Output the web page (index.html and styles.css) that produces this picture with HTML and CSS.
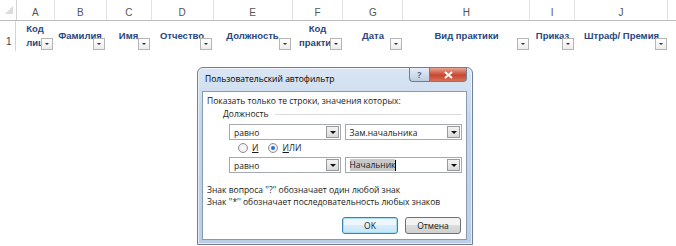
FILE: index.html
```html
<!DOCTYPE html>
<html lang="ru">
<head>
    <meta charset="UTF-8">
    <title>Пользовательский автофильтр</title>
    <link rel="stylesheet" href="styles.css">
</head>
<body>
    <div class="sheet">
        <div class="col-heads">
            <div class="corner"><span class="corner-tri"></span></div>
            <div class="col-head w-a">A</div>
            <div class="col-head w-b">B</div>
            <div class="col-head w-c">C</div>
            <div class="col-head w-d">D</div>
            <div class="col-head w-e">E</div>
            <div class="col-head w-f">F</div>
            <div class="col-head w-g">G</div>
            <div class="col-head w-h">H</div>
            <div class="col-head w-i">I</div>
            <div class="col-head w-j">J</div>
            <div class="col-head w-k"></div>
        </div>
        <div class="row">
            <div class="row-head">1</div>
            <div class="cell w-a"><span class="cell-text">Код лиц</span><span class="filter-btn"></span></div>
            <div class="cell w-b"><span class="cell-text">Фамилия</span><span class="filter-btn"></span></div>
            <div class="cell w-c"><span class="cell-text">Имя</span><span class="filter-btn"></span></div>
            <div class="cell w-d"><span class="cell-text">Отчество</span><span class="filter-btn"></span></div>
            <div class="cell w-e"><span class="cell-text">Должность</span><span class="filter-btn"></span></div>
            <div class="cell w-f"><span class="cell-text">Код практик</span><span class="filter-btn"></span></div>
            <div class="cell w-g"><span class="cell-text">Дата</span><span class="filter-btn"></span></div>
            <div class="cell w-h"><span class="cell-text">Вид практики</span><span class="filter-btn"></span></div>
            <div class="cell w-i"><span class="cell-text">Приказ</span><span class="filter-btn"></span></div>
            <div class="cell w-j"><span class="cell-text">Штраф/ Премия</span><span class="filter-btn"></span></div>
        </div>
    </div>

    <div class="dialog">
        <div class="titlebar">
            <span class="title">Пользовательский автофильтр</span>
            <div class="caption-btns">
                <span class="cap-btn help">?</span>
                <span class="cap-btn close">
                    <svg width="9" height="8" viewBox="0 0 9 8"><path d="M1 1 L8 7 M8 1 L1 7" stroke="#fff" stroke-width="2"/></svg>
                </span>
            </div>
        </div>
        <div class="client">
            <p class="intro">Показать только те строки, значения которых:</p>
            <div class="group">
                <span class="group-label">Должность</span>
                <span class="group-line"></span>
            </div>
            <div class="combo-row first">
                <div class="combo narrow"><span class="combo-val">равно</span><span class="drop"></span></div>
                <div class="combo wide"><span class="combo-val">Зам.начальника</span><span class="drop"></span></div>
            </div>
            <div class="radio-row">
                <span class="radio"><span class="dot"></span><span><u>И</u></span></span>
                <span class="radio"><span class="dot checked"></span><span><u>И</u>ЛИ</span></span>
            </div>
            <div class="combo-row second">
                <div class="combo narrow"><span class="combo-val">равно</span><span class="drop"></span></div>
                <div class="combo wide"><span class="combo-val"><span class="selected">Начальник</span><span class="caret"></span></span><span class="drop"></span></div>
            </div>
            <p class="hint first">Знак вопроса ''?'' обозначает один любой знак</p>
            <p class="hint">Знак ''*'' обозначает последовательность любых знаков</p>
            <div class="buttons">
                <span class="btn default">OK</span>
                <span class="btn">Отмена</span>
            </div>
        </div>
    </div>
</body>
</html>
```

FILE: styles.css
```css
body {
    margin: 0;
    background: #fff;
    font-family: "Open Sans", "Noto Sans", sans-serif;
    position: relative;
    width: 676px;
    height: 246px;
    overflow: hidden;
}

/* spreadsheet */

.sheet {
    display: flex;
    flex-direction: column;
}

.col-heads {
    display: flex;
    height: 21px;
    border-bottom: 1px solid #bcbcbc;
    box-sizing: border-box;
}

.corner {
    width: 16px;
    border-right: 1px solid #d4d4d4;
    position: relative;
}

.corner-tri {
    position: absolute;
    left: 5px;
    top: 6px;
    width: 0;
    height: 0;
    border-left: 8px solid transparent;
    border-bottom: 8px solid #dcdcdc;
}

.col-head {
    border-right: 1px solid #e2e2e2;
    box-sizing: border-box;
    text-align: center;
    font-family: "Liberation Sans", sans-serif;
    font-size: 10px;
    color: #555;
    padding-top: 7px;
}

.w-a { width: 38px; }
.w-b { width: 52px; }
.w-c { width: 45px; }
.w-d { width: 62px; }
.w-e { width: 79px; }
.w-f { width: 51px; }
.w-g { width: 60px; }
.w-h { width: 127px; }
.w-i { width: 45px; }
.w-j { width: 93px; }
.w-k { width: 8px; border-right: none; }

.row {
    display: flex;
    height: 30px;
}

.row-head {
    width: 16px;
    border-right: 1px solid #d4d4d4;
    box-sizing: border-box;
    font-family: "Liberation Sans", sans-serif;
    font-size: 10px;
    color: #444;
    padding: 15px 0 0 6px;
}

.cell {
    position: relative;
    display: flex;
    align-items: center;
    justify-content: center;
    text-align: center;
    box-sizing: border-box;
    padding: 0 2px;
}

.cell-text {
    font-family: "Liberation Sans", sans-serif;
    font-weight: bold;
    font-size: 9.5px;
    line-height: 14px;
    color: #284780;
}

.w-a .cell-text { width: 36px; }
.w-f .cell-text { width: 48px; }
.w-j .cell-text { white-space: nowrap; }

.filter-btn {
    position: absolute;
    right: 1px;
    bottom: 1px;
    width: 10px;
    height: 10px;
    border: 1px solid #b5b5b5;
    background: linear-gradient(#fff, #ececec);
}

.filter-btn::after {
    content: "";
    position: absolute;
    left: 3px;
    top: 4px;
    border-left: 2px solid transparent;
    border-right: 2px solid transparent;
    border-top: 2px solid #333;
}

/* dialog */

.dialog {
    position: absolute;
    left: 197px;
    top: 67px;
    width: 276px;
    height: 178px;
    box-sizing: border-box;
    border: 1px solid #6d7f99;
    border-radius: 6px 6px 0 0;
    background: linear-gradient(#dae6f4, #c5d6ea 30%, #bccee5);
    box-shadow: 0 0 0 1px rgba(255,255,255,0.6) inset;
    padding: 0 5px 4px 4px;
    display: flex;
    flex-direction: column;
    font-size: 8.5px;
    color: #1a1a1a;
}

.titlebar {
    height: 23px;
    display: flex;
    align-items: flex-start;
    justify-content: space-between;
}

.title {
    padding: 5px 0 0 3px;
    color: #000;
}

.caption-btns {
    display: flex;
}

.cap-btn {
    height: 13px;
    border: 1px solid #6e7e96;
    border-top: none;
    display: flex;
    align-items: center;
    justify-content: center;
}

.help {
    width: 19px;
    border-radius: 0 0 0 4px;
    border-right: none;
    background: linear-gradient(#e6eef8, #bccde2);
    color: #5a6c84;
    font-size: 9px;
    font-weight: bold;
}

.close {
    width: 36px;
    border-radius: 0 0 4px 0;
    background: linear-gradient(#e8a493, #c7472f 55%, #d9705a);
}

.client {
    flex: 1;
    background: #fff;
    border: 1px solid #8799b3;
    padding: 3px 4px 0 4px;
    display: flex;
    flex-direction: column;
}

.intro {
    margin: 0;
    line-height: 12px;
}

.group {
    display: flex;
    align-items: center;
    margin: 1px 0 0 16px;
    height: 12px;
}

.group-label {
    line-height: 12px;
}

.group-line {
    flex: 1;
    height: 1px;
    background: #dcdcdc;
    margin-left: 6px;
}

.combo-row {
    display: flex;
    gap: 4px;
    margin-left: 22px;
}

.combo-row.first { margin-top: 4px; }
.combo-row.second { margin-top: 3px; }

.combo {
    height: 16px;
    box-sizing: border-box;
    border: 1px solid #a5a9b0;
    display: flex;
    align-items: center;
    justify-content: space-between;
    padding: 1px;
}

.narrow { width: 112px; }
.wide { width: 118px; }

.combo-val {
    padding-left: 3px;
    display: flex;
    align-items: center;
}

.selected {
    background: #c9c9c9;
    line-height: 12px;
}

.caret {
    width: 1px;
    height: 11px;
    background: #000;
}

.drop {
    width: 13px;
    height: 12px;
    box-sizing: border-box;
    border: 1px solid #9a9a9a;
    background: linear-gradient(#f4f4f4, #dadada);
    position: relative;
}

.drop::after {
    content: "";
    position: absolute;
    left: 3px;
    top: 4px;
    border-left: 3px solid transparent;
    border-right: 3px solid transparent;
    border-top: 3px solid #111;
}

.radio-row {
    display: flex;
    gap: 10px;
    margin: 1px 0 0 31px;
    height: 13px;
    align-items: center;
}

.radio {
    display: flex;
    align-items: center;
    gap: 4px;
}

.dot {
    width: 8px;
    height: 8px;
    border-radius: 50%;
    border: 1px solid #8e8f8f;
    background: radial-gradient(#fff, #e4e4e4);
    position: relative;
}

.dot.checked::after {
    content: "";
    position: absolute;
    left: 2px;
    top: 2px;
    width: 4px;
    height: 4px;
    border-radius: 50%;
    background: #2a6ed4;
}

.hint {
    margin: 0;
    line-height: 12px;
}

.hint.first {
    margin-top: 11px;
}

.buttons {
    display: flex;
    justify-content: flex-end;
    gap: 7px;
    margin-top: 9px;
    padding-right: 1px;
}

.btn {
    width: 56px;
    height: 17px;
    box-sizing: border-box;
    border: 1px solid #707070;
    border-radius: 3px;
    background: linear-gradient(#f3f3f3 50%, #dcdcdc 50%, #d0d0d0);
    display: flex;
    align-items: center;
    justify-content: center;
}

.btn.default {
    border-color: #3c7fb1;
    box-shadow: 0 0 0 1px #a9dff5 inset;
    background: linear-gradient(#ecf6fc 50%, #d7eefa 50%, #c4e5f6);
}
```
